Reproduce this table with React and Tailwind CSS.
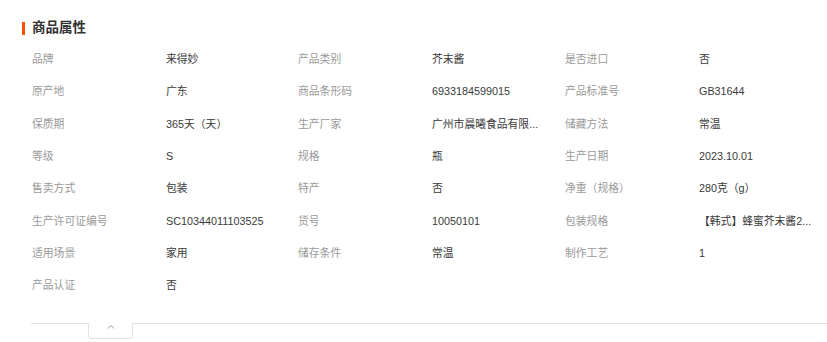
import React from 'react';

const rows = [
  ['品牌', '来得妙', '产品类别', '芥末酱', '是否进口', '否'],
  ['原产地', '广东', '商品条形码', '6933184599015', '产品标准号', 'GB31644'],
  ['保质期', '365天（天）', '生产厂家', '广州市晨曦食品有限...', '储藏方法', '常温'],
  ['等级', 'S', '规格', '瓶', '生产日期', '2023.10.01'],
  ['售卖方式', '包装', '特产', '否', '净重（规格）', '280克（g）'],
  ['生产许可证编号', 'SC10344011103525', '货号', '10050101', '包装规格', '【韩式】蜂蜜芥末酱2...'],
  ['适用场景', '家用', '储存条件', '常温', '制作工艺', '1'],
  ['产品认证', '否'],
];

const App = () => {
  return (
    <div className="w-[827px] h-[342px] bg-white overflow-hidden pt-[21px] font-['Liberation_Sans','Noto_Sans_CJK_SC',sans-serif]">
      {/* Section title */}
      <div className="flex items-center h-[14px] pl-[22px]">
        <span className="w-[3px] h-[13px] bg-[#ff5000]"></span>
        <h3 className="ml-[7px] text-[13.5px] font-bold text-[#333] leading-none">商品属性</h3>
      </div>

      {/* Attribute grid */}
      <div className="mt-[8px] pl-[32px] grid grid-cols-[134px_132px_134px_133px_134px_133px]">
        {rows.map((row, i) =>
          row.map((text, j) => (
            <div
              key={`${i}-${j}`}
              className={`h-[32.3px] flex items-center text-[10.8px] whitespace-nowrap ${
                j % 2 === 0 ? 'text-[#9a9a9a]' : 'text-[#3a3a3a]'
              }`}
            >
              {text}
            </div>
          ))
        )}
      </div>

      {/* Collapse toggle */}
      <div className="mt-[22px] ml-[31px] border-t border-[#e3e3e3]">
        <button className="-mt-px ml-[57px] w-[45px] h-[16px] bg-white border border-t-0 border-[#e3e3e3] rounded-b-[4px] flex justify-center pt-[1px]">
          <svg width="8" height="5" viewBox="0 0 8 5" fill="none">
            <polyline points="1,4.5 4,1.5 7,4.5" stroke="#999" strokeWidth="1" />
          </svg>
        </button>
      </div>
    </div>
  );
};

export default App;
